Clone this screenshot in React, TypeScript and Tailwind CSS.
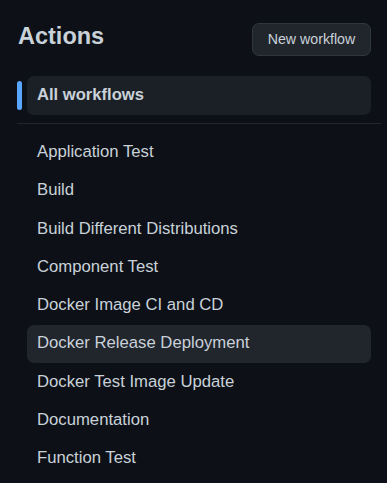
import React from "react";

const items = [
  "Application Test",
  "Build",
  "Build Different Distributions",
  "Component Test",
  "Docker Image CI and CD",
  "Docker Release Deployment",
  "Docker Test Image Update",
  "Documentation",
  "Function Test",
];

export default function App() {
  return (
    <div
      className="min-h-screen w-full bg-[#0d1117] pl-[17px] pt-[19px] text-[#c9d1d9]"
      style={{ fontFamily: '"Liberation Sans", Arial, sans-serif' }}
    >
      <div className="flex items-start justify-between pr-[16px]">
        <h2 className="ml-[1px] mt-[1px] text-[23.5px] font-bold leading-[33px] text-[#c9d1d9]">Actions</h2>
        <button className="mt-[4px] h-[33px] w-[119px] rounded-[7px] border border-[#30363d] bg-[#21262d] text-[14.2px] text-[#c9d1d9]">
          New workflow
        </button>
      </div>

      <div className="mt-[20px] flex items-center pr-[16px]">
        <div className="h-[29px] w-[5px] rounded-[3px] bg-[#58a6ff]" />
        <div className="ml-[5px] flex h-[38.5px] flex-1 items-center rounded-[7px] bg-[#1b2027] pb-[0px] pl-[10px] text-[16.6px] font-bold">
          All workflows
        </div>
      </div>

      <div className="mt-[8.5px] mr-[6px] h-px bg-[#21262d]" />

      <ul className="mt-[10px] flex flex-col gap-[0.75px] pl-[10px] pr-[16px]">
        {items.map((it) => (
          <li
            key={it}
            className={
              "flex h-[37.5px] items-center rounded-[7px] pb-[2px] pl-[10px] text-[16.7px] " +
              (it === "Docker Release Deployment" ? "bg-[#21262d]" : "")
            }
          >
            {it}
          </li>
        ))}
      </ul>
    </div>
  );
}
